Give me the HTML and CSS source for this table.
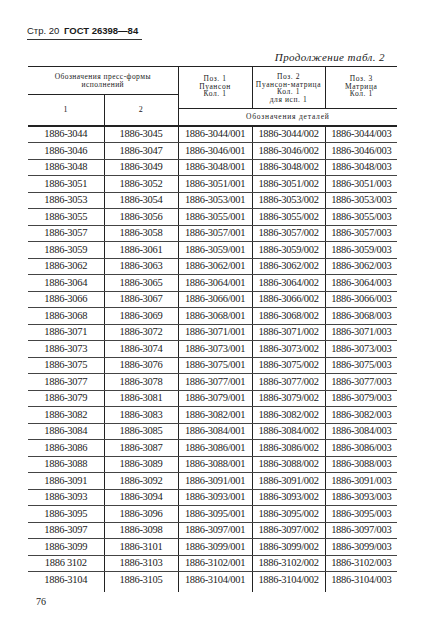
FILE: index.html
```html
<!DOCTYPE html>
<html lang="ru">
<head>
<meta charset="utf-8">
<title>ГОСТ 26398—84</title>
<link rel="stylesheet" href="styles.css">
</head>
<body>
<div class="page">
  <div class="title"><span class="reg">Стр. 20</span> <span class="bold">ГОСТ 26398—84</span></div>
  <div class="cont">Продолжение табл. 2</div>
  <table class="tbl">
    <colgroup>
      <col class="c1"><col class="c2"><col class="c3"><col class="c4"><col class="c5">
    </colgroup>
    <thead>
      <tr class="ha">
        <th colspan="2" class="grp">Обозначения пресс-формы<br>исполнений</th>
        <th rowspan="2" class="pos">Поз. 1<br>Пуансон<br>Кол. 1</th>
        <th rowspan="2" class="pos pos4">Поз. 2<br>Пуансон-матрица<br>Кол. 1<br>для исп. 1</th>
        <th rowspan="2" class="pos">Поз. 3<br>Матрица<br>Кол. 1</th>
      </tr>
      <tr class="hb">
        <th rowspan="2" class="num">1</th>
        <th rowspan="2" class="num">2</th>
      </tr>
      <tr class="hc">
        <th colspan="3" class="det">Обозначения деталей</th>
      </tr>
    </thead>
    <tbody>
      <tr><td>1886-3044</td><td>1886-3045</td><td>1886-3044/001</td><td>1886-3044/002</td><td>1886-3044/003</td></tr>
      <tr><td>1886-3046</td><td>1886-3047</td><td>1886-3046/001</td><td>1886-3046/002</td><td>1886-3046/003</td></tr>
      <tr><td>1886-3048</td><td>1886-3049</td><td>1886-3048/001</td><td>1886-3048/002</td><td>1886-3048/003</td></tr>
      <tr><td>1886-3051</td><td>1886-3052</td><td>1886-3051/001</td><td>1886-3051/002</td><td>1886-3051/003</td></tr>
      <tr><td>1886-3053</td><td>1886-3054</td><td>1886-3053/001</td><td>1886-3053/002</td><td>1886-3053/003</td></tr>
      <tr><td>1886-3055</td><td>1886-3056</td><td>1886-3055/001</td><td>1886-3055/002</td><td>1886-3055/003</td></tr>
      <tr><td>1886-3057</td><td>1886-3058</td><td>1886-3057/001</td><td>1886-3057/002</td><td>1886-3057/003</td></tr>
      <tr><td>1886-3059</td><td>1886-3061</td><td>1886-3059/001</td><td>1886-3059/002</td><td>1886-3059/003</td></tr>
      <tr><td>1886-3062</td><td>1886-3063</td><td>1886-3062/001</td><td>1886-3062/002</td><td>1886-3062/003</td></tr>
      <tr><td>1886-3064</td><td>1886-3065</td><td>1886-3064/001</td><td>1886-3064/002</td><td>1886-3064/003</td></tr>
      <tr><td>1886-3066</td><td>1886-3067</td><td>1886-3066/001</td><td>1886-3066/002</td><td>1886-3066/003</td></tr>
      <tr><td>1886-3068</td><td>1886-3069</td><td>1886-3068/001</td><td>1886-3068/002</td><td>1886-3068/003</td></tr>
      <tr><td>1886-3071</td><td>1886-3072</td><td>1886-3071/001</td><td>1886-3071/002</td><td>1886-3071/003</td></tr>
      <tr><td>1886-3073</td><td>1886-3074</td><td>1886-3073/001</td><td>1886-3073/002</td><td>1886-3073/003</td></tr>
      <tr><td>1886-3075</td><td>1886-3076</td><td>1886-3075/001</td><td>1886-3075/002</td><td>1886-3075/003</td></tr>
      <tr><td>1886-3077</td><td>1886-3078</td><td>1886-3077/001</td><td>1886-3077/002</td><td>1886-3077/003</td></tr>
      <tr><td>1886-3079</td><td>1886-3081</td><td>1886-3079/001</td><td>1886-3079/002</td><td>1886-3079/003</td></tr>
      <tr><td>1886-3082</td><td>1886-3083</td><td>1886-3082/001</td><td>1886-3082/002</td><td>1886-3082/003</td></tr>
      <tr><td>1886-3084</td><td>1886-3085</td><td>1886-3084/001</td><td>1886-3084/002</td><td>1886-3084/003</td></tr>
      <tr><td>1886-3086</td><td>1886-3087</td><td>1886-3086/001</td><td>1886-3086/002</td><td>1886-3086/003</td></tr>
      <tr><td>1886-3088</td><td>1886-3089</td><td>1886-3088/001</td><td>1886-3088/002</td><td>1886-3088/003</td></tr>
      <tr><td>1886-3091</td><td>1886-3092</td><td>1886-3091/001</td><td>1886-3091/002</td><td>1886-3091/003</td></tr>
      <tr><td>1886-3093</td><td>1886-3094</td><td>1886-3093/001</td><td>1886-3093/002</td><td>1886-3093/003</td></tr>
      <tr><td>1886-3095</td><td>1886-3096</td><td>1886-3095/001</td><td>1886-3095/002</td><td>1886-3095/003</td></tr>
      <tr><td>1886-3097</td><td>1886-3098</td><td>1886-3097/001</td><td>1886-3097/002</td><td>1886-3097/003</td></tr>
      <tr><td>1886-3099</td><td>1886-3101</td><td>1886-3099/001</td><td>1886-3099/002</td><td>1886-3099/003</td></tr>
      <tr><td>1886 3102</td><td>1886-3103</td><td>1886-3102/001</td><td>1886-3102/002</td><td>1886-3102/003</td></tr>
      <tr class="last"><td>1886-3104</td><td>1886-3105</td><td>1886-3104/001</td><td>1886-3104/002</td><td>1886-3104/003</td></tr>
    </tbody>
  </table>
  <div class="pageno">76</div>
</div>
</body>
</html>
```
FILE: styles.css
```css
html, body {
  margin: 0;
  padding: 0;
  background: #ffffff;
}
body {
  width: 435px;
  height: 640px;
  overflow: hidden;
  color: #1a1a1a;
}
.page {
  padding: 25px 0 0 28px;
  width: 369px;
}
.title {
  display: block;
  width: 115px;
  margin-left: -1px;
  font-family: "Liberation Sans", Arial, sans-serif;
  font-size: 9.5px;
  line-height: 12px;
  padding-bottom: 2px;
  border-bottom: 1px solid #333;
  white-space: nowrap;
}
.title .reg {
  font-weight: normal;
}
.title .bold {
  font-weight: bold;
  margin-left: 2px;
}
.cont {
  margin-top: 11px;
  text-align: right;
  padding-right: 12px;
  font-family: "Liberation Serif", "Times New Roman", serif;
  font-style: italic;
  font-size: 11px;
  line-height: 12px;
  letter-spacing: 0.4px;
}
.tbl {
  margin-top: 3px;
  border-collapse: collapse;
  table-layout: fixed;
  width: 369px;
  border-top: 1px solid #222;
}
.c1 { width: 76px; }
.c2 { width: 74px; }
.c3 { width: 74px; }
.c4 { width: 73px; }
.c5 { width: 72px; }

.tbl th {
  font-family: "Liberation Serif", "Times New Roman", serif;
  font-weight: normal;
  font-size: 7.5px;
  line-height: 7.5px;
  letter-spacing: 0.6px;
  text-align: center;
  padding: 0;
  border-left: 1px solid #222;
}
.tbl th:first-child { border-left: none; }
.ha { height: 28px; }
.hb { height: 14px; }
.hc { height: 17px; }
.grp {
  line-height: 8px !important;
  font-size: 7.5px !important;
  letter-spacing: 0.45px !important;
  border-bottom: 1px solid #222;
  vertical-align: middle;
}
.pos {
  vertical-align: top;
  padding-top: 8px !important;
  border-bottom: 1px solid #222;
}
.pos4 { padding-top: 6px !important; }
.num {
  font-size: 8px !important;
  border-bottom: 2px solid #222;
  vertical-align: middle;
}
.hb .num:first-child { border-left: none; }
.hb .num + .num { border-left: 1px solid #222; }
.det {
  border-bottom: 2px solid #222;
  border-left: 1px solid #222 !important;
  vertical-align: middle;
  letter-spacing: 0.8px !important;
}

.tbl td {
  font-family: "Liberation Serif", "Times New Roman", serif;
  font-size: 10.5px;
  letter-spacing: -0.3px;
  line-height: 12px;
  height: 15.5px;
  padding: 0;
  text-align: center;
  vertical-align: middle;
  border-left: 1px solid #222;
  border-bottom: 1px solid #444;
  white-space: nowrap;
}
.tbl td:first-child { border-left: none; }
.tbl tr.last td {
  border-bottom: none;
  height: 18px;
  vertical-align: top;
  padding-top: 2px;
}
.pageno {
  margin-top: 4px;
  margin-left: 8px;
  font-family: "Liberation Serif", "Times New Roman", serif;
  font-size: 10px;
  line-height: 12px;
}
```
